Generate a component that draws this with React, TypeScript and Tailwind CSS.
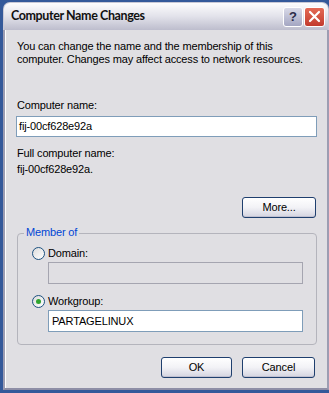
import React from "react";

const font = { fontFamily: '"Liberation Sans", Arial, sans-serif' };

function XPButton({ label, className = "" }: { label: string; className?: string }) {
  return (
    <div
      className={
        "h-[21px] rounded-[3px] border border-[#1f3f6e] bg-gradient-to-b from-[#ffffff] via-[#f2f2f6] to-[#d4d4e0] flex items-center justify-center text-[11px] text-black shadow-[inset_0_-1px_0_#c0c0d0] " +
        className
      }
    >
      {label}
    </div>
  );
}

function Radio({ checked }: { checked?: boolean }) {
  return (
    <div className="w-[13px] h-[13px] rounded-full border border-[#1c5180] bg-gradient-to-br from-[#dcdcdc] to-[#ffffff] flex items-center justify-center">
      {checked && <div className="w-[5px] h-[5px] rounded-full bg-[#2fa52f]" />}
    </div>
  );
}

export default function App() {
  return (
    <div className="w-[329px] h-[393px] bg-[#34599a] overflow-hidden" style={font}>
      <div className="ml-[3px] mt-[2px] w-[326px] h-[388px] flex flex-col">
        {/* title bar */}
        <div className="h-[28px] rounded-t-[7px] bg-gradient-to-b from-[#fdfdfe] via-[#e2e2ea] to-[#bdbdcd] border-t border-l border-r border-[#c9c9d6] flex items-center pl-[7px] pr-[3px]">
          <div
            className="text-[12.5px] font-bold text-[#111] flex-1 tracking-[-0.4px]"
            style={{ fontFamily: 'Lato, "Liberation Sans", sans-serif' }}
          >
            Computer Name Changes
          </div>
          <div className="flex gap-[1px]">
            <div className="w-[20px] h-[20px] rounded-[3px] border border-white bg-gradient-to-b from-[#d9dae8] to-[#a4a6c2] flex items-center justify-center text-[13px] font-bold text-[#2c2c48]">
              ?
            </div>
            <div className="w-[21px] h-[20px] rounded-[3px] border border-white bg-gradient-to-b from-[#e46a55] to-[#c23a2e] flex items-center justify-center">
              <svg width="13" height="13" viewBox="0 0 13 13">
                <path d="M2 2 L11 11 M11 2 L2 11" stroke="#fff" strokeWidth="2.2" strokeLinecap="round" />
              </svg>
            </div>
          </div>
        </div>
        {/* body */}
        <div className="flex-1 bg-[#e0dfe3] border-l-[2px] border-b-[2px] border-r-[2px] border-l-[#9d9db2] border-b-[#8e8ea6] border-r-[#9d9db2] shadow-[inset_1px_0_0_#ffffff]">
          <div className="flex flex-col pl-[11px] text-[11px] leading-[13px] text-black w-[312px] tracking-[-0.15px]">
            <div className="mt-[10px] ml-[1px]">
              You can change the name and the membership of this
              <br />
              computer. Changes may affect access to network resources.
            </div>
            <div className="mt-[33px] ml-[1px]">Computer name:</div>
            <div className="mt-[4px] w-[301px] h-[21px] bg-white border border-[#7f9db9] flex items-center pl-[2px]">
              fij-00cf628e92a
            </div>
            <div className="mt-[10px] ml-[1px]">Full computer name:</div>
            <div className="mt-[3px] ml-[1px]">fij-00cf628e92a.</div>
            <div className="flex justify-end mt-[21px] w-[301px] pr-[1px]">
              <XPButton label="More..." className="w-[74px]" />
            </div>
            {/* group box */}
            <div className="relative mt-[15px] ml-[1px] w-[300px] h-[112px] border border-[#b4b4bc] rounded-[4px]">
              <div className="absolute left-[6px] top-[-8px] bg-[#e0dfe3] px-[2px] text-[#0046d5]">Member of</div>
              <div className="flex flex-col pl-[14px]">
                <div className="flex items-center gap-[3px] mt-[13px]">
                  <Radio />
                  <span>Domain:</span>
                </div>
                <div className="mt-[2px] ml-[16px] w-[255px] h-[22px] border border-[#a5a5b0] bg-[#e0dfe3]" />
                <div className="flex items-center gap-[3px] mt-[11px]">
                  <Radio checked />
                  <span>Workgroup:</span>
                </div>
                <div className="mt-[2px] ml-[16px] w-[255px] h-[22px] border border-[#7f9db9] bg-white flex items-center pl-[3px]">
                  PARTAGELINUX
                </div>
              </div>
            </div>
            <div className="flex justify-end gap-[10px] mt-[12px] w-[301px] pr-[2px]">
              <XPButton label="OK" className="w-[71px]" />
              <XPButton label="Cancel" className="w-[73px]" />
            </div>
          </div>
        </div>
      </div>
    </div>
  );
}
